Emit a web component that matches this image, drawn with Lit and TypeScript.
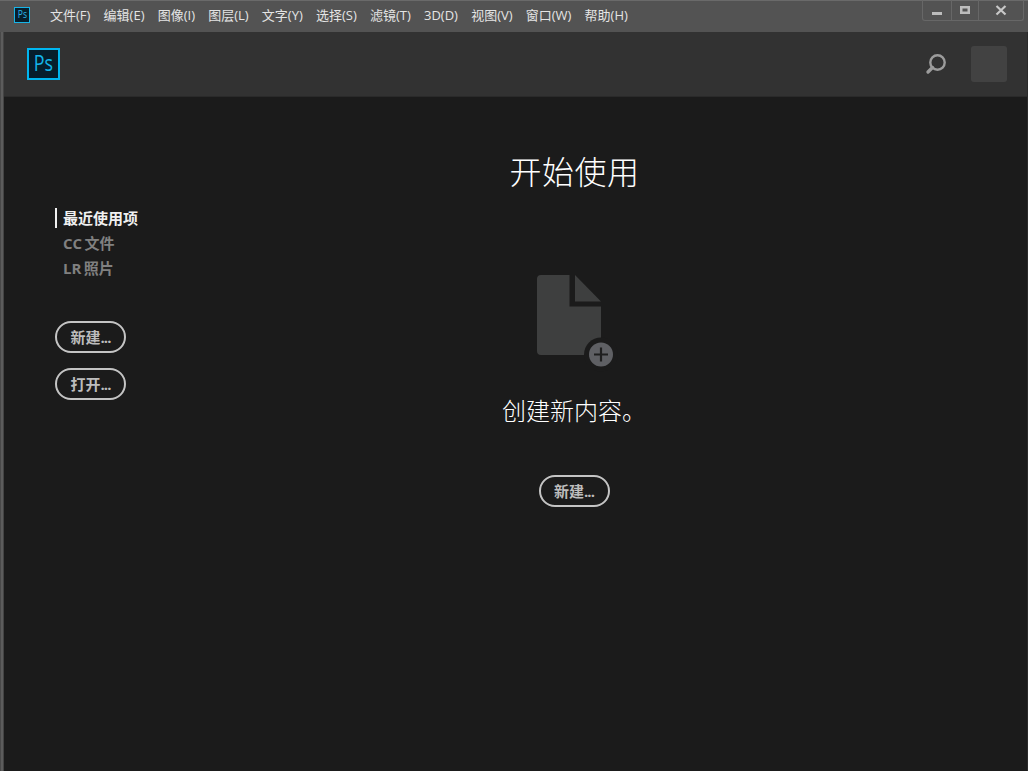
import { LitElement, html, css, svg } from "lit";
import { customElement } from "lit/decorators.js";

const MENUS = ["文件(F)", "编辑(E)", "图像(I)", "图层(L)", "文字(Y)", "选择(S)", "滤镜(T)", "3D(D)", "视图(V)", "窗口(W)", "帮助(H)"];

@customElement("app-root")
export class AppRoot extends LitElement {
  static styles = css`
    :host { display: block; width: 1028px; height: 771px; font-family: "Open Sans", "Noto Sans CJK SC", sans-serif; overflow: hidden; }
    .win { height: 771px; display: flex; flex-direction: column; background: #5c5c5c; box-sizing: border-box; border-left: 1px solid #494949; }
    .title { height: 32px; flex: none; display: flex; align-items: flex-start; position: relative; border-top: 1px solid #6a6a6a; box-sizing: border-box; background: #535353; margin-left: -1px; }
    .tlogo { flex: none; margin: 6px 0 0 14px; width: 16px; height: 16px; box-sizing: border-box; border: 1px solid #17b4e8; background: #071f2c; color: #2bb7ea; font-size: 10px; line-height: 13px; text-align: center; }
    .tlogo span, .plogo span { display: inline-block; transform: scaleX(0.85); }
    .menu { display: flex; margin: 5px 0 0 20px; gap: 13.2px; color: #e4e4e4; font-size: 13px; line-height: 18px; white-space: nowrap; }
    .controls { position: absolute; top: -1px; left: 922px; width: 102px; height: 21px; box-sizing: border-box; display: flex; border: 1px solid #676767; border-top: none; border-radius: 0 0 3px 3px; }
    .controls div { display: flex; align-items: center; justify-content: center; box-sizing: border-box; }
    .controls div + div { border-left: 1px solid #676767; }
    .c1 { width: 28px; } .c2 { width: 27px; } .c3 { flex: 1; }
    .frame { flex: 1; margin: 0 0 0 2px; display: flex; flex-direction: column; background: #1b1b1b; min-height: 0; box-sizing: border-box; border-left: 1px solid #444; border-right: 1px solid #2a2a2a; }
    .head { height: 65px; flex: none; display: flex; align-items: center; background: #323232; box-sizing: border-box; border-bottom: 1px solid #2a2a2a; padding: 0 20px 0 23px; }
    .plogo { width: 33px; height: 32px; box-sizing: border-box; border: 2px solid #00b6f0; background: #061e2c; color: #13b5ea; font-size: 21px; line-height: 27px; text-align: center; }
    .spacer { flex: 1; }
    .search { display: block; margin: 2px 24px 0 0; }
    .avatar { width: 36px; height: 36px; border-radius: 3px; background: #424242; }
    .body { flex: 1; display: flex; min-height: 0; }
    .side { width: 117px; flex: none; box-sizing: border-box; padding: 111px 0 0 51px; }
    .nav { display: flex; flex-direction: column; gap: 5px; margin-bottom: 43px; }
    .nav div { height: 20px; line-height: 20px; padding-left: 8px; font-size: 15px; font-weight: 700; color: #808080; white-space: nowrap; word-spacing: -1.5px; }
    .nav .on { color: #f0f0f0; border-left: 2px solid #f0f0f0; padding-left: 6px; }
    .btn { display: flex; align-items: center; justify-content: center; width: 71px; height: 32px; box-sizing: border-box; border: 2px solid #c4c4c4; border-radius: 16px; color: #bdbdbd; font-size: 15px; font-weight: 700; line-height: 20px; white-space: nowrap; }
    .dots { letter-spacing: -1px; }
    .side .btn + .btn { margin-top: 15px; }
    .main { flex: 1; display: flex; flex-direction: column; align-items: center; }
    h1 { margin: 52px 0 0 1px; font-size: 32px; letter-spacing: 0.5px; line-height: 46px; font-weight: 300; color: #fff; }
    .doc { display: block; margin-top: 80px; overflow: visible; }
    h2 { margin: 22px 0 0; font-size: 24px; line-height: 34px; font-weight: 300; color: #fff; }
    .main .btn { margin-top: 47px; }
  `;

  render() {
    return html`<div class="win">
      <div class="title">
        <div class="tlogo"><span>Ps</span></div>
        <div class="menu">${MENUS.map((m) => html`<span>${m}</span>`)}</div>
        <div class="controls">
          <div class="c1"><svg width="11" height="11" viewBox="0 0 11 11"><rect x="0" y="7" width="10" height="3" fill="#bcbcbc"/></svg></div>
          <div class="c2"><svg width="11" height="11" viewBox="0 0 11 11"><path d="M0 1h10v8H0z M2.5 3.5v3h5v-3z" fill="#bcbcbc" fill-rule="evenodd"/></svg></div>
          <div class="c3"><svg width="12" height="11" viewBox="0 0 12 11"><path d="M1.5 1l9 8.5M10.5 1l-9 8.5" stroke="#c8c8c8" stroke-width="2.2" fill="none"/></svg></div>
        </div>
      </div>
      <div class="frame">
        <div class="head">
          <div class="plogo"><span>Ps</span></div>
          <div class="spacer"></div>
          <svg class="search" width="22" height="22" viewBox="0 0 22 22"><circle cx="12.5" cy="8.5" r="7.2" fill="none" stroke="#9c9c9c" stroke-width="2.4"/><path d="M7.5 13.5L3 18" stroke="#9c9c9c" stroke-width="3.4" stroke-linecap="round"/></svg>
          <div class="avatar"></div>
        </div>
        <div class="body">
          <div class="side">
            <div class="nav">
              <div class="on">最近使用项</div>
              <div>CC 文件</div>
              <div>LR 照片</div>
            </div>
            <div class="btn">新建<span class="dots">...</span></div>
            <div class="btn">打开<span class="dots">...</span></div>
          </div>
          <div class="main">
            <h1>开始使用</h1>
            <svg class="doc" width="80" height="97" viewBox="-3 0 80 97">
              ${svg`<path d="M4 0H32.5V31.5H64V76A4 4 0 0 1 60 80H4A4 4 0 0 1 0 76V4A4 4 0 0 1 4 0Z" fill="#3e3f3f"/>
              <path d="M38 0L64 26.5H38Z" fill="#3e3f3f"/>
              <circle cx="64" cy="79.5" r="17" fill="#1b1b1b"/>
              <circle cx="64" cy="79.5" r="12" fill="#5f6064"/>
              <path d="M57 79.5H71M64 72.5V86.5" stroke="#1f1f1f" stroke-width="2.2"/>`}
            </svg>
            <h2>创建新内容。</h2>
            <div class="btn">新建<span class="dots">...</span></div>
          </div>
        </div>
      </div>
    </div>`;
  }
}
